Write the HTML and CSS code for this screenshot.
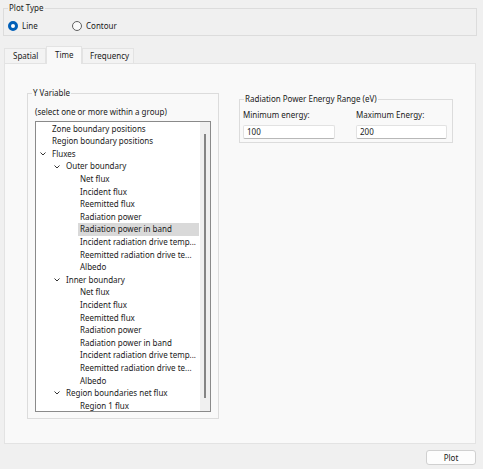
FILE: index.html
```html
<!DOCTYPE html>
<html>
<head>
<meta charset="utf-8">
<link rel="stylesheet" href="styles.css">
</head>
<body>
<div class="window">
  <fieldset class="group plot-type">
    <legend>Plot Type</legend>
    <div class="radios">
      <label class="radio checked"><span class="dot"></span>Line</label>
      <label class="radio"><span class="dot"></span>Contour</label>
    </div>
  </fieldset>

  <div class="tabs">
    <div class="tab">Spatial</div>
    <div class="tab active">Time</div>
    <div class="tab">Frequency</div>
  </div>

  <div class="panel">
    <fieldset class="group yvar">
      <legend>Y Variable</legend>
      <div class="hint">(select one or more within a group)</div>
      <div class="tree">
        <div class="rows">
          <div class="row l0"><span class="chev"></span><span class="txt">Zone boundary positions</span></div>
          <div class="row l0"><span class="chev"></span><span class="txt">Region boundary positions</span></div>
          <div class="row l0"><span class="chev"><svg viewBox="0 0 6 4" width="6" height="4"><polyline points="0.5,0.5 3,3 5.5,0.5"/></svg></span><span class="txt">Fluxes</span></div>
          <div class="row l1"><span class="chev"><svg viewBox="0 0 6 4" width="6" height="4"><polyline points="0.5,0.5 3,3 5.5,0.5"/></svg></span><span class="txt">Outer boundary</span></div>
          <div class="row l2"><span class="chev"></span><span class="txt">Net flux</span></div>
          <div class="row l2"><span class="chev"></span><span class="txt">Incident flux</span></div>
          <div class="row l2"><span class="chev"></span><span class="txt">Reemitted flux</span></div>
          <div class="row l2"><span class="chev"></span><span class="txt">Radiation power</span></div>
          <div class="row l2 selected"><span class="chev"></span><span class="txt">Radiation power in band</span></div>
          <div class="row l2"><span class="chev"></span><span class="txt">Incident radiation drive temp...</span></div>
          <div class="row l2"><span class="chev"></span><span class="txt">Reemitted radiation drive te...</span></div>
          <div class="row l2"><span class="chev"></span><span class="txt">Albedo</span></div>
          <div class="row l1"><span class="chev"><svg viewBox="0 0 6 4" width="6" height="4"><polyline points="0.5,0.5 3,3 5.5,0.5"/></svg></span><span class="txt">Inner boundary</span></div>
          <div class="row l2"><span class="chev"></span><span class="txt">Net flux</span></div>
          <div class="row l2"><span class="chev"></span><span class="txt">Incident flux</span></div>
          <div class="row l2"><span class="chev"></span><span class="txt">Reemitted flux</span></div>
          <div class="row l2"><span class="chev"></span><span class="txt">Radiation power</span></div>
          <div class="row l2"><span class="chev"></span><span class="txt">Radiation power in band</span></div>
          <div class="row l2"><span class="chev"></span><span class="txt">Incident radiation drive temp...</span></div>
          <div class="row l2"><span class="chev"></span><span class="txt">Reemitted radiation drive te...</span></div>
          <div class="row l2"><span class="chev"></span><span class="txt">Albedo</span></div>
          <div class="row l1"><span class="chev"><svg viewBox="0 0 6 4" width="6" height="4"><polyline points="0.5,0.5 3,3 5.5,0.5"/></svg></span><span class="txt">Region boundaries net flux</span></div>
          <div class="row l2 last"><span class="chev"></span><span class="txt">Region 1 flux</span></div>
        </div>
        <div class="scroll"><div class="thumb"></div></div>
      </div>
    </fieldset>

    <fieldset class="group energy">
      <legend>Radiation Power Energy Range (eV)</legend>
      <div class="fields">
        <div class="field min">
          <div class="lbl">Minimum energy:</div>
          <div class="input">100</div>
        </div>
        <div class="field max">
          <div class="lbl">Maximum Energy:</div>
          <div class="input">200</div>
        </div>
      </div>
    </fieldset>
  </div>

  <div class="footer">
    <button class="btn">Plot</button>
  </div>
</div>
</body>
</html>
```

FILE: styles.css
```css
* { box-sizing: border-box; }

html, body {
  margin: 0;
  padding: 0;
  background: #f0f0f0;
}

body {
  font-family: "Noto Sans", "DejaVu Sans", sans-serif;
  font-size: 8px;
  color: #1a1a1a;
  width: 483px;
  height: 469px;
  overflow: hidden;
  padding-top: 2px;
}

.window {
  display: flex;
  flex-direction: column;
}

.group {
  margin: 0;
  border: 1px solid #dcdcdc;
  min-width: 0;
}

.group legend {
  padding: 0 1px;
  line-height: 12px;
  height: 12px;
}

/* Plot type */
.plot-type {
  margin: 0 6px 0 3px;
  padding: 6px 4px 3px 4px;
}

.radios {
  display: flex;
  align-items: center;
  height: 12px;
}

.radio {
  display: flex;
  align-items: center;
  line-height: 12px;
}

.radio:first-child { width: 64px; }

.radio .dot {
  width: 10px;
  height: 10px;
  border-radius: 50%;
  border: 1px solid #5f5f5f;
  margin-right: 4px;
  background: #fafafa;
  flex: none;
}

.radio.checked .dot {
  border: 3px solid #005fb8;
  background: #fff;
}

/* Tabs */
.tabs {
  display: flex;
  align-items: flex-end;
  margin: 10px 0 0 4px;
  height: 17px;
  position: relative;
  z-index: 1;
}

.tab {
  height: 15px;
  line-height: 14px;
  padding: 0 0 0 8px;
  background: #f3f3f3;
  border: 1px solid #e3e3e3;
  border-bottom: none;
}

.tab:first-child { width: 42px; }
.tab.active {
  height: 18px;
  width: 36px;
  line-height: 16px;
  padding-left: 8px;
  background: #f9f9f9;
  margin-bottom: -1px;
  border-color: #e3e3e3;
}
.tab:last-child { width: 52px; padding-left: 7px; }

.panel {
  margin-left: 4px;
  width: 472px;
  height: 381px;
  background: #f9f9f9;
  border: 1px solid #e3e3e3;
  display: flex;
  align-items: flex-start;
  padding: 23px 0 0 22px;
}

/* Y variable */
.yvar {
  width: 192px;
  padding: 0 7px 6px 7px;
}

.yvar legend { margin-left: -3px; }

.hint {
  line-height: 12px;
  margin-top: 7px;
  margin-bottom: 3px;
}

.tree {
  width: 176px;
  height: 291px;
  border: 1px solid #8a8a8a;
  background: #fff;
  display: flex;
  overflow: hidden;
}

.rows {
  flex: 1;
  min-width: 0;
  padding-top: 0.7px;
}

.row {
  display: flex;
  align-items: center;
  height: 12.6px;
  line-height: 12.6px;
  white-space: nowrap;
  margin-right: 1px;
}

.row.l0 { padding-left: 4px; }
.row.l1 { padding-left: 18px; }
.row.l2 { padding-left: 32px; }

.chev {
  width: 12px;
  flex: none;
  display: flex;
  align-items: center;
}

.chev svg {
  display: block;
  fill: none;
  stroke: #333;
  stroke-width: 1;
}

.txt {
  flex: 1;
  min-width: 0;
  padding-left: 2px;
  margin-left: -2px;
}

.row.selected .txt { background: #d9d9d9; }

.scroll {
  width: 10px;
  flex: none;
  background: #f0f0f0;
  padding: 12px 0 0 4px;
}

.thumb {
  width: 2px;
  height: 264px;
  background: #858585;
}

/* Energy */
.energy {
  margin-left: 20px;
  margin-top: 6px;
  width: 214px;
  padding: 4px 4px 3px 3px;
}

.energy legend { margin-left: 1px; }

.fields {
  display: flex;
  gap: 21px;
}

.field.min { width: 92px; }
.field.max { width: 91px; }

.lbl {
  line-height: 12px;
  margin-bottom: 4px;
}

.input {
  height: 14px;
  line-height: 12px;
  background: #fff;
  border: 1px solid #e2e2e2;
  border-bottom-color: #b8b8b8;
  padding-left: 3px;
  border-radius: 2px;
}

/* Footer */
.footer {
  display: flex;
  justify-content: flex-end;
  padding: 6px 7px 0 0;
}

.btn {
  width: 50px;
  height: 15px;
  font-family: inherit;
  font-size: 8px;
  line-height: 12px;
  padding: 0;
  background: #fdfdfd;
  border: 1px solid #d0d0d0;
  border-radius: 3px;
  color: #1a1a1a;
}
```
